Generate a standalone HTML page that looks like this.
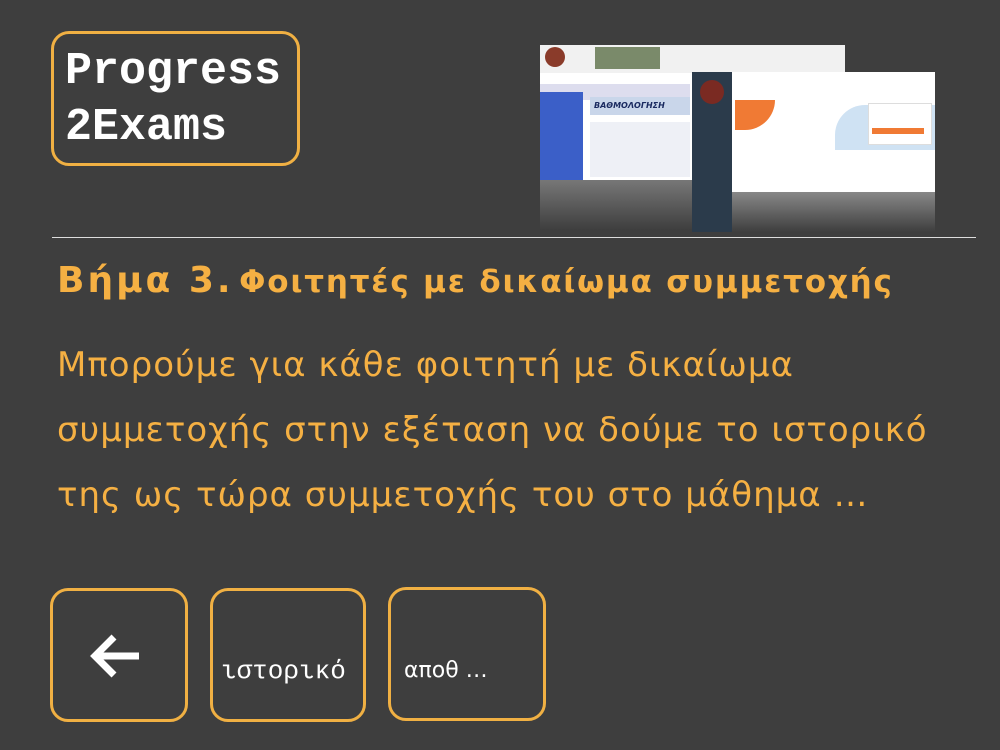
<!DOCTYPE html>
<html><head><meta charset="utf-8"><style>
body{margin:0;width:1000px;height:750px;background:#3e3e3e;position:relative;overflow:hidden;font-family:"DejaVu Sans","Liberation Sans",sans-serif}
.box{position:absolute;border:3px solid #f0b043;border-radius:18px;box-sizing:border-box}
.o{color:#f5b043;position:absolute}
</style></head><body>
<div class="box" style="left:51px;top:31px;width:249px;height:135px"></div>
<div style="position:absolute;left:65px;top:44px;font-family:'Liberation Mono',monospace;font-weight:bold;font-size:45px;line-height:56px;color:#fff">Progress<br>2Exams</div>

<div style="position:absolute;left:540px;top:45px;width:305px;height:135px;background:#fff"></div>
<div style="position:absolute;left:540px;top:45px;width:305px;height:28px;background:#f1f1f1"></div>
<div style="position:absolute;left:545px;top:47px;width:20px;height:20px;border-radius:50%;background:#8a3b2a"></div>
<div style="position:absolute;left:595px;top:47px;width:65px;height:22px;background:#7a8a6a"></div>
<div style="position:absolute;left:540px;top:84px;width:150px;height:16px;background:#dde"></div>
<div style="position:absolute;left:540px;top:92px;width:43px;height:88px;background:#3b5fc8"></div>
<div style="position:absolute;left:590px;top:97px;width:100px;height:18px;background:#c9d6ea"></div>
<div style="position:absolute;left:594px;top:101px;font-size:8px;font-weight:bold;font-style:italic;color:#1a2a60">ΒΑΘΜΟΛΟΓΗΣΗ</div>
<div style="position:absolute;left:590px;top:122px;width:100px;height:55px;background:#eef0f6"></div>
<div style="position:absolute;left:540px;top:180px;width:155px;height:50px;background:linear-gradient(#777,#3e3e3e)"></div>
<div style="position:absolute;left:692px;top:72px;width:243px;height:120px;background:#fff"></div>
<div style="position:absolute;left:692px;top:72px;width:40px;height:160px;background:#2b3b4b"></div>
<div style="position:absolute;left:700px;top:80px;width:24px;height:24px;border-radius:50%;background:#7a2a22"></div>
<div style="position:absolute;left:735px;top:100px;width:40px;height:30px;background:#f07a34;border-radius:0 0 40px 0"></div>
<div style="position:absolute;left:835px;top:105px;width:100px;height:45px;background:#cfe2f3;border-radius:30px 0 0 0"></div>
<div style="position:absolute;left:868px;top:103px;width:62px;height:40px;background:#fff;border:1px solid #ddd"></div>
<div style="position:absolute;left:872px;top:128px;width:52px;height:6px;background:#f07a34"></div>
<div style="position:absolute;left:732px;top:192px;width:203px;height:40px;background:linear-gradient(#888,#3e3e3e)"></div>

<div style="position:absolute;left:52px;top:237px;width:924px;height:1px;background:#ddd"></div>
<div class="o" style="left:57px;top:260px;font-weight:bold;white-space:nowrap"><span style="font-size:36px;letter-spacing:3px">Βήμα 3.</span> <span style="font-size:31px;letter-spacing:1.8px">Φοιτητές με δικαίωμα συμμετοχής</span></div>
<div class="o" style="left:57px;top:333px;font-size:34px;line-height:65px;letter-spacing:1px;white-space:nowrap">Μπορούμε για κάθε φοιτητή με δικαίωμα<br>συμμετοχής στην εξέταση να δούμε το ιστορικό<br>της ως τώρα συμμετοχής του στο μάθημα …</div>

<div class="box" style="left:50px;top:588px;width:138px;height:134px"></div>
<svg style="position:absolute;left:86px;top:633px" width="54" height="48" viewBox="0 0 54 48"><path d="M53 23H8M28 4L9 23L28 42" stroke="#fff" stroke-width="7" fill="none"/></svg>
<div class="box" style="left:210px;top:588px;width:156px;height:134px"></div>
<div style="position:absolute;left:221px;top:656px;font-family:'Liberation Mono','DejaVu Sans Mono',monospace;font-size:26px;color:#fff">ιστορικό</div>
<div class="box" style="left:388px;top:587px;width:158px;height:134px"></div>
<div style="position:absolute;left:404px;top:658px;font-size:22px;color:#fff">αποθ …</div>
</body></html>
